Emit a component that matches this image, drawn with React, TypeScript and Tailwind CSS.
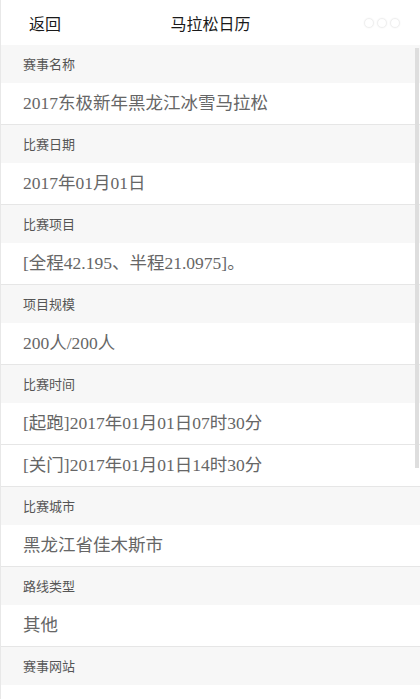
import React from 'react';

type Section = { label: string; values: string[] };

const sections: Section[] = [
  { label: '赛事名称', values: ['2017东极新年黑龙江冰雪马拉松'] },
  { label: '比赛日期', values: ['2017年01月01日'] },
  { label: '比赛项目', values: ['[全程42.195、半程21.0975]。'] },
  { label: '项目规模', values: ['200人/200人'] },
  { label: '比赛时间', values: ['[起跑]2017年01月01日07时30分', '[关门]2017年01月01日14时30分'] },
  { label: '比赛城市', values: ['黑龙江省佳木斯市'] },
  { label: '路线类型', values: ['其他'] },
  { label: '赛事网站', values: [''] },
];

const sans = "font-['Noto_Sans_CJK_SC',sans-serif]";

export default function App() {
  return (
    <div className="relative h-[699px] w-full overflow-hidden border-l border-[#e8e8e8] bg-white">
      {/* top bar */}
      <div className={`grid h-[45px] grid-cols-[1fr_auto_1fr] items-center text-[16px] text-[#1a1a1a] ${sans}`}>
        <span className="pl-[28px]">返回</span>
        <span>马拉松日历</span>
        <div className="flex items-center justify-end gap-[3px] pr-[20px]">
          {[0, 1, 2].map((i) => (
            <span
              key={i}
              className="h-[10px] w-[10px] rounded-full border border-[#f0f0f0] bg-white shadow-[0_0_2px_rgba(0,0,0,0.06)]"
            />
          ))}
        </div>
      </div>

      {sections.map((s) => (
        <div key={s.label}>
          <div className={`flex h-[38px] items-center bg-[#f7f7f7] pl-[22px] text-[13px] text-[#555] ${sans}`}>
            {s.label}
          </div>
          {s.values.map((v, i) => (
            <div
              key={i}
              className="flex h-[42px] items-center border-b border-[#e6e6e6] pl-[22px] font-['Liberation_Serif','Noto_Sans_CJK_SC',serif] text-[17.5px] text-[#666]"
            >
              {v}
            </div>
          ))}
        </div>
      ))}

      {/* scrollbar thumb */}
      <div className="absolute right-[1px] top-[48px] h-[420px] w-[4px] bg-[#dedede]" />
    </div>
  );
}
